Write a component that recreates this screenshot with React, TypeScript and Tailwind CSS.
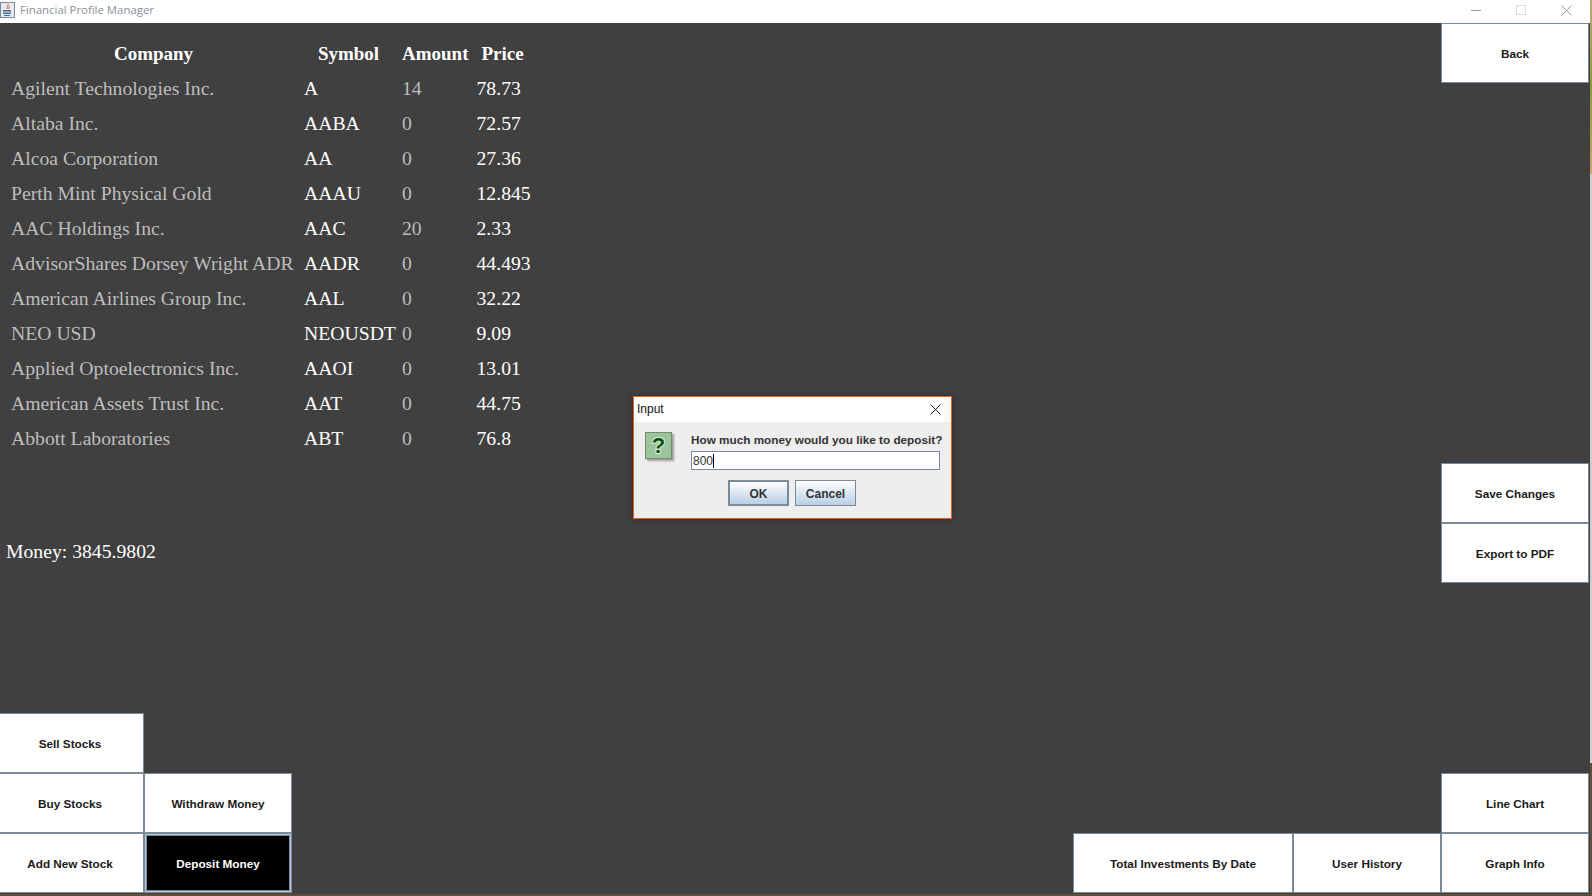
const rows = [
  { company: 'Agilent Technologies Inc.', symbol: 'A', amount: '14', price: '78.73' },
  { company: 'Altaba Inc.', symbol: 'AABA', amount: '0', price: '72.57' },
  { company: 'Alcoa Corporation', symbol: 'AA', amount: '0', price: '27.36' },
  { company: 'Perth Mint Physical Gold', symbol: 'AAAU', amount: '0', price: '12.845' },
  { company: 'AAC Holdings Inc.', symbol: 'AAC', amount: '20', price: '2.33' },
  { company: 'AdvisorShares Dorsey Wright ADR', symbol: 'AADR', amount: '0', price: '44.493' },
  { company: 'American Airlines Group Inc.', symbol: 'AAL', amount: '0', price: '32.22' },
  { company: 'NEO USD', symbol: 'NEOUSDT', amount: '0', price: '9.09' },
  { company: 'Applied Optoelectronics Inc.', symbol: 'AAOI', amount: '0', price: '13.01' },
  { company: 'American Assets Trust Inc.', symbol: 'AAT', amount: '0', price: '44.75' },
  { company: 'Abbott Laboratories', symbol: 'ABT', amount: '0', price: '76.8' },
];

function SwingButton({ label, width = 'w-[148px]', dark = false }: { label: string; width?: string; dark?: boolean }) {
  return (
    <button
      className={`${width} h-[60px] shrink-0 flex items-center justify-center pt-[1px] text-[11.75px] font-bold border border-[#7a8a99] ${
        dark ? 'bg-black text-white shadow-[inset_0_0_0_1px_#b5c7da,inset_0_0_0_2px_#7a8a99]' : 'bg-white text-[#1a1a1a]'
      }`}
    >
      {label}
    </button>
  );
}

function JavaIcon() {
  return (
    <svg width="15" height="17" viewBox="0 0 15 17" className="shrink-0">
      <rect x="0.5" y="1.5" width="14" height="15" fill="#e6eaf0" stroke="#7a8a99" />
      <path d="M8 3c1 2-2 3-1 5M10 5c-1 1-2 2-1 3" stroke="#d9531e" strokeWidth="1" fill="none" />
      <path d="M3.5 9.5h7v1.5h-7zM3 12.5h8M4 14.5h6" stroke="#4a6d8c" strokeWidth="1" fill="none" />
    </svg>
  );
}

function CloseGlyph({ color }: { color: string }) {
  return (
    <svg width="11" height="11" viewBox="0 0 11 11" className="shrink-0">
      <path d="M0.5 0.5l10 10M10.5 0.5l-10 10" stroke={color} strokeWidth="1" fill="none" />
    </svg>
  );
}

function QuestionIcon() {
  return (
    <div className="w-[27px] h-[27px] flex items-center justify-center bg-[#9dc49d] border border-[#6b8f6b] shadow-[2px_2px_2px_rgba(0,0,0,0.35)]">
      <span className="text-[22px] font-bold leading-none text-[#0b4a0b] [-webkit-text-stroke:2px_#d8f0d8] [paint-order:stroke_fill]">?</span>
    </div>
  );
}

function InputDialog() {
  return (
    <div className="absolute left-[633px] top-[373px] w-[319px] h-[123px] flex flex-col bg-[#eeeeee] border border-[#f05a14] shadow-[0_0_6px_rgba(0,0,0,0.35)]">
      <div className="h-[25px] shrink-0 bg-white flex items-center justify-between pl-[3px] pr-[10px]">
        <span className="text-[12px] text-[#111] pb-[2px]">Input</span>
        <CloseGlyph color="#222" />
      </div>
      <div className="flex pl-[11px] pt-[10px]">
        <QuestionIcon />
        <div className="ml-[19px] w-[249px]">
          <div className="text-[11.75px] font-bold leading-[16px] text-[#333] whitespace-nowrap">How much money would you like to deposit?</div>
          <div className="mt-[3px] h-[19px] bg-white border border-[#7a8a99] flex items-center pl-[1px] pt-[1px] text-[12px] text-[#333]">
            800<span className="w-px h-[14px] bg-black" />
          </div>
          <div className="mt-[10px] ml-[37px] flex gap-[6px]">
            <button className="w-[61px] h-[26px] pt-[1px] text-[12px] font-bold text-[#333] border-2 border-[#7a8a99] bg-gradient-to-b from-white to-[#b8cfe5]">OK</button>
            <button className="w-[61px] h-[26px] pt-[1px] text-[12px] font-bold text-[#333] border border-[#7a8a99] bg-gradient-to-b from-white to-[#b8cfe5]">Cancel</button>
          </div>
        </div>
      </div>
    </div>
  );
}

export default function App() {
  return (
    <div className="w-[1592px] h-[896px] overflow-hidden flex flex-col bg-[#5f4e3c] font-['Liberation_Sans',sans-serif]">
      <div className="h-[894px] shrink-0 flex">
        <div className="w-[1590px] shrink-0 flex flex-col">
          {/* Title bar */}
          <div className="h-[23px] shrink-0 bg-white flex items-center justify-between pb-[3px]">
            <div className="flex items-center gap-[5px]">
              <JavaIcon />
              <span className="font-['Open_Sans',sans-serif] text-[11.4px] text-[#8a8f99]">Financial Profile Manager</span>
            </div>
            <div className="flex items-center gap-[35px] pr-[18px]">
              <div className="w-[10px] h-px bg-[#999]" />
              <div className="w-[10px] h-[10px] border border-[#ddd]" />
              <CloseGlyph color="#999" />
            </div>
          </div>

          {/* Window content */}
          <div className="relative flex-1 flex flex-col pr-[1px] bg-[#404040]">
            <div className="flex-1 flex justify-between">
              <div className="pl-[6px] pt-[13px]">
                <table className="border-collapse font-['Liberation_Serif',serif] text-[19.7px]">
                  <thead>
                    <tr className="h-[35px] text-[19px] text-white">
                      <th className="w-[298px] text-center font-bold pr-[3px] pt-[2px]">Company</th>
                      <th className="w-[98px] text-center font-bold pr-[9px] pt-[2px]">Symbol</th>
                      <th className="w-[74px] text-center font-bold pr-[8px] pt-[2px]">Amount</th>
                      <th className="text-center font-bold pr-[2px] pt-[2px]">Price</th>
                    </tr>
                  </thead>
                  <tbody>
                    {rows.map((row) => (
                      <tr key={row.symbol} className="h-[35px]">
                        <td className="pl-[5px] text-[#bdbdbd] whitespace-nowrap">{row.company}</td>
                        <td className="text-white">{row.symbol}</td>
                        <td className="text-[#bdbdbd]">{row.amount}</td>
                        <td className="text-white">{row.price}</td>
                      </tr>
                    ))}
                  </tbody>
                </table>
                <div className="mt-[83px] font-['Liberation_Serif',serif] text-[19.7px] leading-[24px] text-white">Money: 3845.9802</div>
              </div>
              <div className="flex flex-col">
                <SwingButton label="Back" />
                <div className="h-[380px]" />
                <SwingButton label="Save Changes" />
                <SwingButton label="Export to PDF" />
              </div>
            </div>

            <div className="h-[181px] shrink-0 pb-[1px] flex justify-between items-end">
              <div className="flex items-end -ml-[4px]">
                <div className="flex flex-col">
                  <SwingButton label="Sell Stocks" />
                  <SwingButton label="Buy Stocks" />
                  <SwingButton label="Add New Stock" />
                </div>
                <div className="flex flex-col">
                  <SwingButton label="Withdraw Money" />
                  <SwingButton label="Deposit Money" dark />
                </div>
              </div>
              <div className="flex items-end">
                <SwingButton label="Total Investments By Date" width="w-[220px]" />
                <SwingButton label="User History" />
                <div className="flex flex-col">
                  <SwingButton label="Line Chart" />
                  <SwingButton label="Graph Info" />
                </div>
              </div>
            </div>

            <InputDialog />
          </div>
        </div>

        {/* Desktop showing past the window edge */}
        <div className="flex-1 flex flex-col">
          <div className="h-[174px] bg-gradient-to-b from-[#b9a878] via-[#8f9a3c] to-[#c9a770]" />
          <div className="h-[589px] bg-[#cfcfcf]" />
          <div className="flex-1 bg-[#5f4e3c]" />
        </div>
      </div>
    </div>
  );
}
